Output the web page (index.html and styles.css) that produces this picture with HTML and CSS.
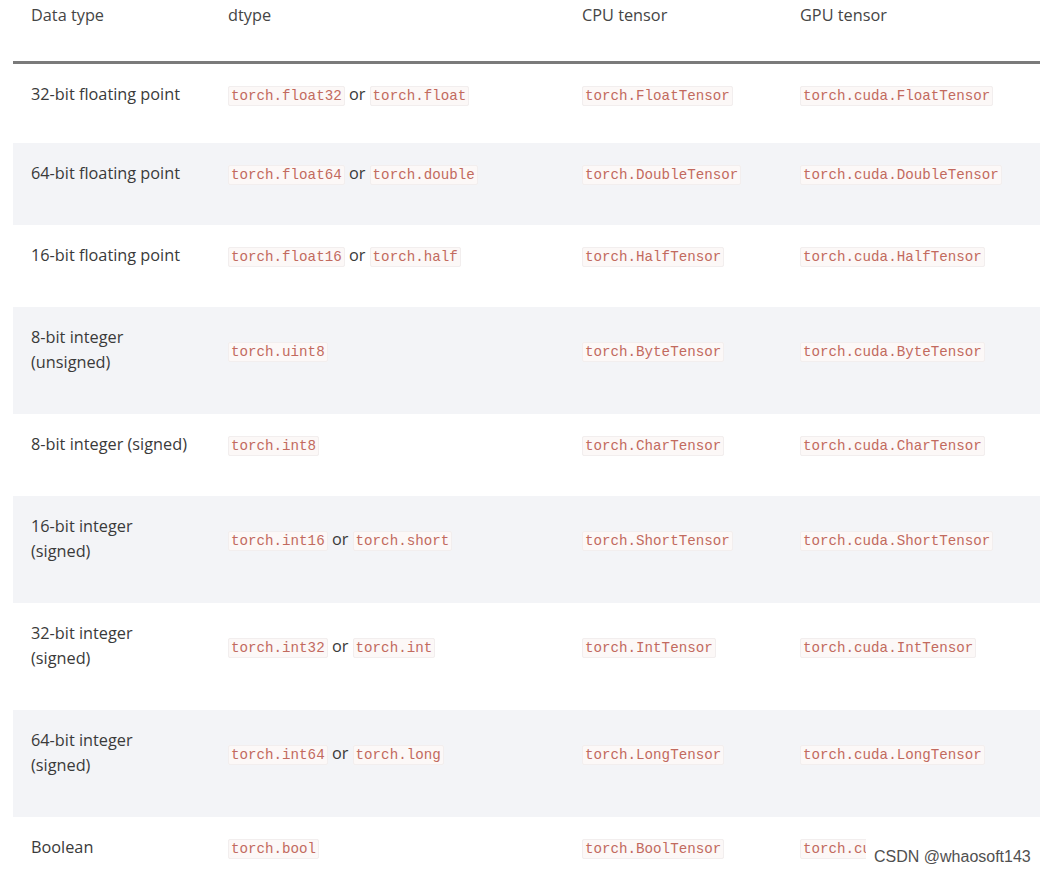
FILE: index.html
```html
<!DOCTYPE html>
<html>
<head>
<meta charset="utf-8">
<link rel="stylesheet" href="styles.css">
</head>
<body>
<div class="table">
  <div class="row head">
    <div class="cell">Data type</div>
    <div class="cell">dtype</div>
    <div class="cell">CPU tensor</div>
    <div class="cell">GPU tensor</div>
  </div>
  <div class="row first">
    <div class="cell">32-bit floating point</div>
    <div class="cell"><code>torch.float32</code> or <code>torch.float</code></div>
    <div class="cell"><code>torch.FloatTensor</code></div>
    <div class="cell"><code>torch.cuda.FloatTensor</code></div>
  </div>
  <div class="row alt">
    <div class="cell">64-bit floating point</div>
    <div class="cell"><code>torch.float64</code> or <code>torch.double</code></div>
    <div class="cell"><code>torch.DoubleTensor</code></div>
    <div class="cell"><code>torch.cuda.DoubleTensor</code></div>
  </div>
  <div class="row">
    <div class="cell">16-bit floating point</div>
    <div class="cell"><code>torch.float16</code> or <code>torch.half</code></div>
    <div class="cell"><code>torch.HalfTensor</code></div>
    <div class="cell"><code>torch.cuda.HalfTensor</code></div>
  </div>
  <div class="row alt">
    <div class="cell">8-bit integer<br>(unsigned)</div>
    <div class="cell"><code>torch.uint8</code></div>
    <div class="cell"><code>torch.ByteTensor</code></div>
    <div class="cell"><code>torch.cuda.ByteTensor</code></div>
  </div>
  <div class="row">
    <div class="cell">8-bit integer (signed)</div>
    <div class="cell"><code>torch.int8</code></div>
    <div class="cell"><code>torch.CharTensor</code></div>
    <div class="cell"><code>torch.cuda.CharTensor</code></div>
  </div>
  <div class="row alt">
    <div class="cell">16-bit integer<br>(signed)</div>
    <div class="cell"><code>torch.int16</code> or <code>torch.short</code></div>
    <div class="cell"><code>torch.ShortTensor</code></div>
    <div class="cell"><code>torch.cuda.ShortTensor</code></div>
  </div>
  <div class="row">
    <div class="cell">32-bit integer<br>(signed)</div>
    <div class="cell"><code>torch.int32</code> or <code>torch.int</code></div>
    <div class="cell"><code>torch.IntTensor</code></div>
    <div class="cell"><code>torch.cuda.IntTensor</code></div>
  </div>
  <div class="row alt">
    <div class="cell">64-bit integer<br>(signed)</div>
    <div class="cell"><code>torch.int64</code> or <code>torch.long</code></div>
    <div class="cell"><code>torch.LongTensor</code></div>
    <div class="cell"><code>torch.cuda.LongTensor</code></div>
  </div>
  <div class="row">
    <div class="cell">Boolean</div>
    <div class="cell"><code>torch.bool</code></div>
    <div class="cell"><code>torch.BoolTensor</code></div>
    <div class="cell"><code>torch.cuda.BoolTensor</code></div>
  </div>
</div>
<div class="watermark">CSDN @whaosoft143</div>
</body>
</html>
```
FILE: styles.css
```css
html, body {
  margin: 0;
  padding: 0;
  background: #ffffff;
  overflow: hidden;
}
body {
  font-family: "Open Sans", "DejaVu Sans", sans-serif;
  font-size: 16.3px;
  color: #3a3a3a;
  width: 1047px;
  height: 873px;
  position: relative;
}
.table {
  margin-left: 13px;
  width: 1027px;
}
.row {
  display: grid;
  grid-template-columns: 197px 354px 218px 258px;
  align-items: center;
  padding: 18px 0 39px;
  line-height: 25px;
}
.row.first {
  padding-bottom: 36px;
}
.row.alt {
  background: #f3f4f7;
}
.row.head {
  padding: 3px 0 33px;
  border-bottom: 3px solid #7a7a7a;
  color: #454545;
}
.cell {
  padding-left: 18px;
}
code {
  font-family: "Liberation Mono", "DejaVu Sans Mono", monospace;
  font-size: 14.2px;
  line-height: 1;
  color: #c26a5e;
  background: #fcf8f7;
  border: 1px solid #f2eeee;
  padding: 1px 2px;
  border-radius: 2px;
}
.watermark {
  position: absolute;
  left: 866px;
  top: 834px;
  padding: 11px 8px 0;
  background: #ffffff;
  font-family: "Liberation Sans", Arial, sans-serif;
  font-size: 16px;
  color: #505050;
  line-height: 24px;
}
```
